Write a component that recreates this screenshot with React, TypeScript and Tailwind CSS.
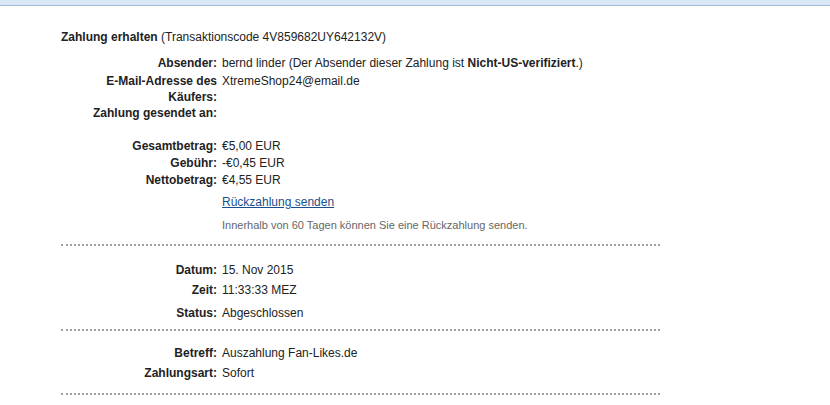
import React from "react";

const font = { fontFamily: '"Liberation Sans", Arial, sans-serif' };

function Row({
  label,
  children,
  className = "",
}: {
  label: React.ReactNode;
  children?: React.ReactNode;
  className?: string;
}) {
  return (
    <div className={`flex text-[12px] leading-4 text-[#222] ${className}`}>
      <div className="w-[156px] shrink-0 text-right font-bold">{label}</div>
      <div className="pl-[5px]">{children}</div>
    </div>
  );
}

function Dots({ className = "" }: { className?: string }) {
  return <div className={`w-[599px] border-t-2 border-dotted border-[#a0a0a0] ${className}`} />;
}

export default function App() {
  return (
    <div className="w-[830px] h-[405px] bg-white overflow-hidden" style={font}>
      <div className="h-[5px] bg-[#d9e8f8] border-b border-[#a2bcd3] box-content" />
      <div className="pl-[61px]">
        <div className="mt-[23px] text-[12px] leading-4 text-[#222]">
          <span className="font-bold">Zahlung erhalten</span> (Transaktionscode 4V859682UY642132V)
        </div>
        <Row label="Absender:" className="mt-[10px]">
          bernd linder (Der Absender dieser Zahlung ist <span className="font-bold">Nicht-US-verifiziert</span>.)
        </Row>
        <Row label="E-Mail-Adresse des Käufers:" className="mt-[2px]">
          XtremeShop24@email.de
        </Row>
        <Row label="Zahlung gesendet an:" />
        <Row label="Gesamtbetrag:" className="mt-[17px]">
          €5,00 EUR
        </Row>
        <Row label="Gebühr:" className="mt-[1px]">
          -€0,45 EUR
        </Row>
        <Row label="Nettobetrag:" className="mt-[1px]">
          €4,55 EUR
        </Row>
        <Row label="" className="mt-[6px]">
          <a href="#" className="text-[#1a4f8c] underline">
            Rückzahlung senden
          </a>
        </Row>
        <div className="mt-[7px] flex text-[11px] leading-4 text-[#666]">
          <div className="w-[156px] shrink-0" />
          <div className="pl-[5px]">Innerhalb von 60 Tagen können Sie eine Rückzahlung senden.</div>
        </div>
        <Dots className="mt-[11px]" />
        <Row label="Datum:" className="mt-[16px]">
          15. Nov 2015
        </Row>
        <Row label="Zeit:" className="mt-[4px]">
          11:33:33 MEZ
        </Row>
        <Row label="Status:" className="mt-[7px]">
          Abgeschlossen
        </Row>
        <Dots className="mt-[8px]" />
        <Row label="Betreff:" className="mt-[14px]">
          Auszahlung Fan-Likes.de
        </Row>
        <Row label="Zahlungsart:" className="mt-[4px]">
          Sofort
        </Row>
        <Dots className="mt-[12px]" />
      </div>
    </div>
  );
}
